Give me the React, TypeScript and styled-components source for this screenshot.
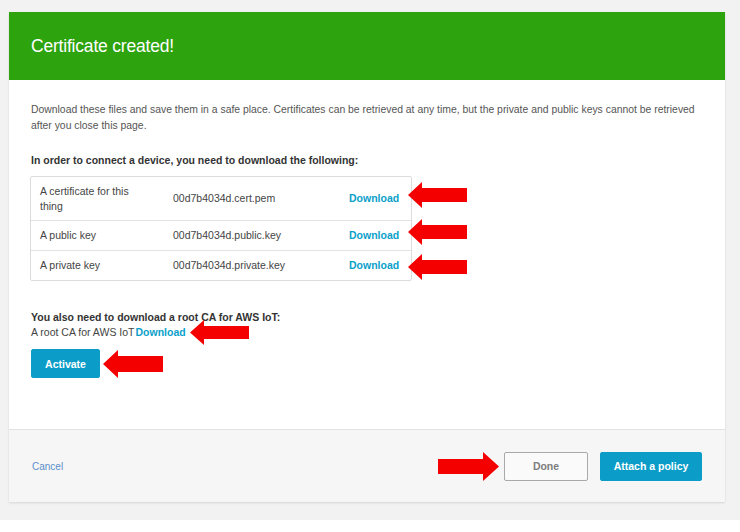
import { FC } from 'react';
import styled, { createGlobalStyle } from 'styled-components';

const GlobalStyle = createGlobalStyle`
    html, body {
        margin: 0;
        padding: 0;
        background: #ffffff;
        font-family: "Liberation Sans", Arial, sans-serif;
    }
`;

const Page = styled.div`
    background: #f2f2f3;
    height: 520px;
    box-sizing: border-box;
    padding: 12px 15px 0 9px;
`;

const Card = styled.div`
    background: #ffffff;
    box-shadow: 0 1px 2px rgba(0, 0, 0, 0.12);
`;

const Header = styled.div`
    background: #2da30e;
    height: 68px;
    display: flex;
    align-items: center;
    padding: 0 22px;
`;

const Title = styled.h1`
    margin: 0;
    color: #ffffff;
    font-size: 17.5px;
    font-weight: 400;
    letter-spacing: -0.2px;
`;

const Body = styled.div`
    padding: 22px 20px 51px 22px;
    color: #444;
`;

const Intro = styled.p`
    margin: 0;
    font-size: 10.4px;
    line-height: 16px;
    color: #555;
`;

const Heading = styled.div<{ $top: number }>`
    margin-top: ${p => p.$top}px;
    font-size: 10.5px;
    line-height: 16px;
    font-weight: 700;
    color: #333;
`;

const Table = styled.div`
    margin-top: 8px;
    width: 382px;
    border: 1px solid #dcdcdc;
    border-radius: 2px;
    box-sizing: border-box;
    margin-left: -1px;
`;

const Row = styled.div<{ $first?: boolean }>`
    position: relative;
    display: grid;
    grid-template-columns: 133px 176px 1fr;
    align-items: center;
    min-height: ${p => (p.$first ? 43 : 30)}px;
    padding: 6px 0;
    box-sizing: border-box;
    font-size: 10.5px;
    line-height: 15px;
    color: #444;
    border-top: ${p => (p.$first ? 'none' : '1px solid #e3e3e3')};
`;

const Cell = styled.div<{ $pr?: number }>`
    padding: 0 ${p => p.$pr ?? 9}px 0 9px;
`;

const Link = styled.a<{ $ml?: number }>`
    color: #0b9fca;
    font-weight: 700;
    text-decoration: none;
    cursor: pointer;
    margin-left: ${p => p.$ml ?? 0}px;
`;

const RowArrow = styled.span<{ $dy: number }>`
    position: absolute;
    left: calc(100% - 3px);
    top: 50%;
    transform: translateY(calc(-50% + ${p => p.$dy}px));
    display: flex;
`;

const RootLine = styled.div`
    display: flex;
    align-items: center;
    height: 14px;
    font-size: 10.5px;
    line-height: 14px;
    color: #444;
`;

const InlineArrow = styled.span<{ $ml: number }>`
    display: flex;
    align-items: center;
    height: 14px;
    margin-left: ${p => p.$ml}px;
`;

const ActionRow = styled.div`
    margin-top: 10px;
    display: flex;
    align-items: center;
    gap: 3px;
`;

const Button = styled.button<{ $primary?: boolean; $w: number }>`
    width: ${p => p.$w}px;
    height: 29px;
    border-radius: 2px;
    font-family: inherit;
    font-size: 10.5px;
    font-weight: 700;
    cursor: pointer;
    background: ${p => (p.$primary ? '#0b9dc7' : '#fafafa')};
    color: ${p => (p.$primary ? '#ffffff' : '#7d7d7d')};
    border: 1px solid ${p => (p.$primary ? '#0b9dc7' : '#a9a9a9')};
`;

const Footer = styled.div`
    background: #f6f6f6;
    border-top: 1px solid #e2e2e2;
    height: 73px;
    box-sizing: border-box;
    display: flex;
    align-items: center;
    justify-content: space-between;
    padding: 0 23px 0 23px;
`;

const Cancel = styled.a`
    font-size: 10px;
    color: #5a8fc9;
    cursor: pointer;
`;

const FooterActions = styled.div`
    display: flex;
    align-items: center;
    gap: 12px;
`;

const DoneGroup = styled.div`
    display: flex;
    align-items: center;
    gap: 5px;
`;

const Arrow: FC<{ dir: 'left' | 'right'; w: number; h: number }> = ({ dir, w, h }) => {
    const head = Math.round(h * 0.55);
    const s1 = Math.round(h * 0.23);
    const s2 = h - s1;
    const pts =
        dir === 'left'
            ? `0,${h / 2} ${head},0 ${head},${s1} ${w},${s1} ${w},${s2} ${head},${s2} ${head},${h}`
            : `${w},${h / 2} ${w - head},0 ${w - head},${s1} 0,${s1} 0,${s2} ${w - head},${s2} ${w - head},${h}`;
    return (
        <svg width={w} height={h} viewBox={`0 0 ${w} ${h}`} style={{ flexShrink: 0 }}>
            <polygon points={pts} fill="#f40000" />
        </svg>
    );
};

const files = [
    { label: 'A certificate for this thing', file: '00d7b4034d.cert.pem', dy: -4 },
    { label: 'A public key', file: '00d7b4034d.public.key', dy: -4 },
    { label: 'A private key', file: '00d7b4034d.private.key', dy: 1 },
];

const App: FC = () => {
    return (
        <>
            <GlobalStyle />
            <Page>
                <Card>
                    <Header>
                        <Title>Certificate created!</Title>
                    </Header>
                    <Body>
                        <Intro>
                            Download these files and save them in a safe place. Certificates can be retrieved at any
                            time, but the private and public keys cannot be retrieved after you close this page.
                        </Intro>
                        <Heading $top={18}>In order to connect a device, you need to download the following:</Heading>
                        <Table>
                            {files.map((f, i) => (
                                <Row key={f.file} $first={i === 0}>
                                    <Cell $pr={22}>{f.label}</Cell>
                                    <Cell>{f.file}</Cell>
                                    <Cell>
                                        <Link>Download</Link>
                                    </Cell>
                                    <RowArrow $dy={f.dy}>
                                        <Arrow dir="left" w={59} h={26} />
                                    </RowArrow>
                                </Row>
                            ))}
                        </Table>
                        <Heading $top={28}>You also need to download a root CA for AWS IoT:</Heading>
                        <RootLine>
                            A root CA for AWS IoT<Link $ml={1}>Download</Link>
                            <InlineArrow $ml={4}>
                                <Arrow dir="left" w={59} h={25} />
                            </InlineArrow>
                        </RootLine>
                        <ActionRow>
                            <Button $primary $w={69}>Activate</Button>
                            <InlineArrow $ml={0}>
                                <Arrow dir="left" w={60} h={28} />
                            </InlineArrow>
                        </ActionRow>
                    </Body>
                    <Footer>
                        <Cancel>Cancel</Cancel>
                        <FooterActions>
                            <DoneGroup>
                                <Arrow dir="right" w={61} h={29} />
                                <Button $w={84}>Done</Button>
                            </DoneGroup>
                            <Button $primary $w={102}>Attach a policy</Button>
                        </FooterActions>
                    </Footer>
                </Card>
            </Page>
        </>
    );
};

export default App;
